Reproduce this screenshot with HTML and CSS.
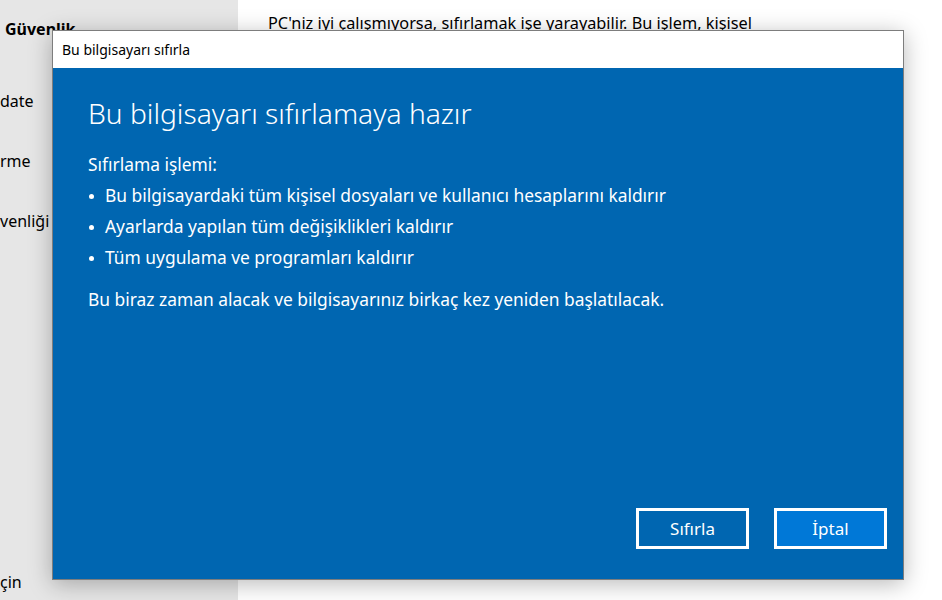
FILE: index.html
```html
<!DOCTYPE html>
<html lang="tr">
<head>
<meta charset="utf-8">
<title>Bu bilgisayarı sıfırla</title>
<link rel="stylesheet" href="styles.css">
</head>
<body>
<div class="page">
  <aside class="sidebar">
    <div class="side-title">Güvenlik</div>
    <div class="side-item first">date</div>
    <div class="side-item">rme</div>
    <div class="side-item">venliği</div>
    <div class="side-spacer"></div>
    <div class="side-item last">çin</div>
  </aside>
  <main class="content">
    <p class="intro">PC'niz iyi çalışmıyorsa, sıfırlamak işe yarayabilir. Bu işlem, kişisel</p>
  </main>
</div>

<div class="dialog">
  <div class="titlebar">Bu bilgisayarı sıfırla</div>
  <div class="dialog-body">
    <h1 class="heading">Bu bilgisayarı sıfırlamaya hazır</h1>
    <p class="lead">Sıfırlama işlemi:</p>
    <ul class="list">
      <li>Bu bilgisayardaki tüm kişisel dosyaları ve kullanıcı hesaplarını kaldırır</li>
      <li>Ayarlarda yapılan tüm değişiklikleri kaldırır</li>
      <li>Tüm uygulama ve programları kaldırır</li>
    </ul>
    <p class="note">Bu biraz zaman alacak ve bilgisayarınız birkaç kez yeniden başlatılacak.</p>
    <div class="actions">
      <button class="btn">Sıfırla</button>
      <button class="btn btn-primary">İptal</button>
    </div>
  </div>
</div>
</body>
</html>
```

FILE: styles.css
```css
* { box-sizing: border-box; }
html, body {
  margin: 0;
  padding: 0;
  width: 942px;
  height: 600px;
  overflow: hidden;
  background: #ffffff;
  font-family: "Noto Sans", "Open Sans", sans-serif;
}
.page {
  display: flex;
  height: 600px;
}
.sidebar {
  width: 238px;
  background: #e6e6e6;
  display: flex;
  flex-direction: column;
  color: #000;
  font-size: 16px;
}
.side-title {
  font-weight: 700;
  font-size: 16px;
  padding: 18px 0 0 5px;
  line-height: 22px;
}
.side-item {
  line-height: 22px;
  margin-top: 38px;
}
.side-item.first { margin-top: 50px; }
.side-spacer { flex: 1; }
.side-item.last { margin: 0 0 7px 0; }
.content {
  flex: 1;
  padding: 12px 0 0 30px;
}
.intro {
  margin: 0;
  font-size: 16.3px;
  line-height: 22px;
  color: #000;
}

.dialog {
  position: absolute;
  left: 52px;
  top: 30px;
  width: 852px;
  height: 550px;
  border: 1px solid #7d7d7d;
  background: #0066b1;
  display: flex;
  flex-direction: column;
  box-shadow: 0 4px 22px rgba(0, 0, 0, 0.28);
}
.titlebar {
  height: 37px;
  background: #ffffff;
  color: #000;
  font-size: 14px;
  line-height: 37px;
  padding-left: 9px;
}
.dialog-body {
  flex: 1;
  display: flex;
  flex-direction: column;
  padding: 26px 16px 30px 35px;
  color: #ffffff;
  font-size: 17.4px;
}
.heading {
  margin: 0;
  font-weight: 300;
  font-size: 28.2px;
  line-height: 38px;
}
.lead {
  margin: 17px 0 0 0;
  line-height: 31px;
}
.list {
  margin: 0;
  padding: 0;
  list-style: none;
}
.list li {
  line-height: 31px;
  padding-left: 17px;
  position: relative;
}
.list li::before {
  content: "";
  position: absolute;
  left: 1px;
  top: 14px;
  width: 5px;
  height: 5px;
  border-radius: 50%;
  background: #fff;
}
.note {
  margin: 11px 0 0 0;
  line-height: 31px;
}
.actions {
  margin-top: auto;
  display: flex;
  justify-content: flex-end;
  gap: 25px;
}
.btn {
  width: 113px;
  height: 41px;
  border: 3px solid #ffffff;
  background: #0066b1;
  color: #ffffff;
  font-family: inherit;
  font-size: 17px;
  padding: 0;
}
.btn-primary { background: #0078d7; }
```
